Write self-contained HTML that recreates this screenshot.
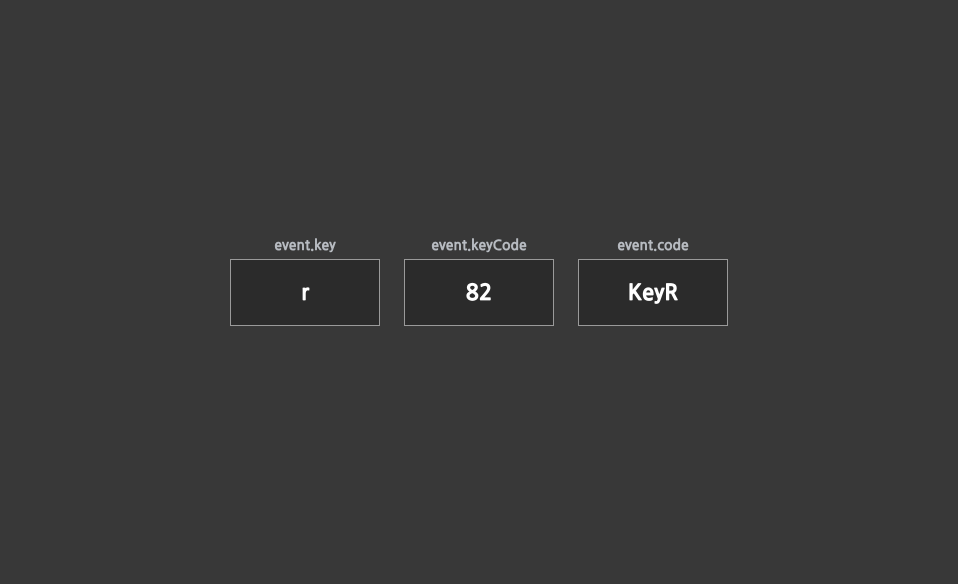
<!DOCTYPE html>
<html><head><style>
html,body{margin:0;width:958px;height:584px;background:#383838;font-family:"NanumGothic","Liberation Sans",sans-serif;overflow:hidden}
.c{position:absolute;top:238px;width:150px;text-align:center}
.l{color:#b8bcc2;font-size:14px;font-weight:bold;-webkit-text-stroke:0.4px #b8bcc2;height:21px;line-height:17px}
.b{box-sizing:border-box;width:150px;height:67px;border:1px solid #9a9a9a;background:#2b2b2b;color:#fff;font-size:22px;font-weight:bold;-webkit-text-stroke:0.7px #fff;line-height:67px}
</style></head><body>
<div class="c" style="left:230px"><div class="l">event.key</div><div class="b">r</div></div>
<div class="c" style="left:404px"><div class="l">event.keyCode</div><div class="b">82</div></div>
<div class="c" style="left:578px"><div class="l">event.code</div><div class="b">KeyR</div></div>
</body></html>
